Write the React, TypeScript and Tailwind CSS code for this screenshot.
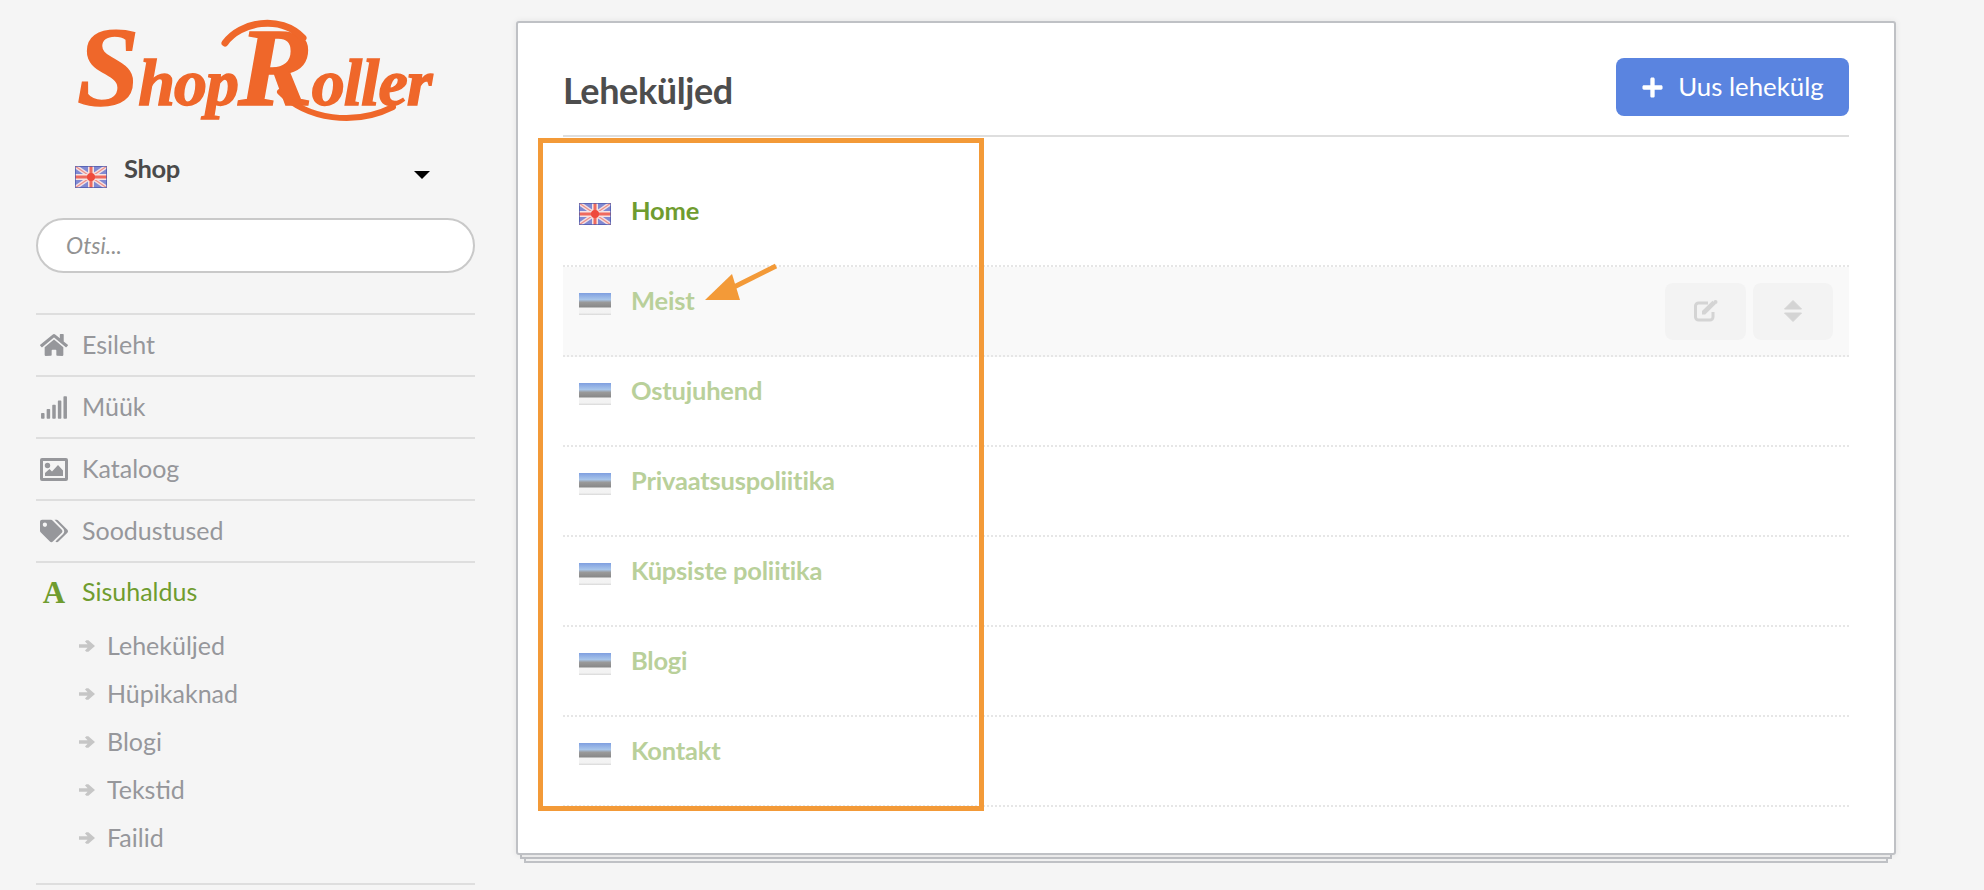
import { FaHome, FaPlus, FaSignal, FaTags } from "react-icons/fa";

const sans = "font-['Lato','Noto_Sans',sans-serif]";

function ImageIcon() {
  return (
    <svg width="28" height="23" viewBox="0 0 28 23" fill="currentColor">
      <path d="M2 0H26A2 2 0 0 1 28 2V21A2 2 0 0 1 26 23H2A2 2 0 0 1 0 21V2A2 2 0 0 1 2 0ZM3 3V20H25V3Z" fillRule="evenodd" />
      <circle cx="7.5" cy="7.5" r="2.7" />
      <path d="M5 18V15L9.5 11L12 13.5L18 7L23 12.5V18Z" />
    </svg>
  );
}

function SubArrow() {
  return (
    <svg width="16" height="12" viewBox="0 0 16 12" fill="#c6c6c6" className="shrink-0">
      <path d="M0 4.2H8.6L6 1.4L7.4 0.2H9.4L16 6L9.4 11.8H7.4L6 10.6L8.6 7.8H0Z" />
    </svg>
  );
}

function EditIcon() {
  return (
    <svg width="24" height="22" viewBox="0 0 24 22" fill="none">
      <path d="M19 12V17A3 3 0 0 1 16 20H4.5A3 3 0 0 1 1.5 17V6A3 3 0 0 1 4.5 3H14" stroke="#d4d4d4" strokeWidth="3" />
      <path d="M8 11L18.5 0.8L21.8 4L11.2 14.5H8Z" fill="#d4d4d4" />
      <circle cx="21.5" cy="2" r="2" fill="#d4d4d4" />
    </svg>
  );
}

function SortIcon() {
  return (
    <svg width="18" height="22" viewBox="0 0 18 22" fill="#d4d4d4">
      <path d="M9 0.5L17.5 9H0.5Z" stroke="#d4d4d4" strokeLinejoin="round" />
      <path d="M9 21.5L17.5 13H0.5Z" stroke="#d4d4d4" strokeLinejoin="round" />
    </svg>
  );
}

const navItems = [
  { label: "Esileht", icon: <FaHome className="h-[26px] w-[28px]" /> },
  { label: "Müük", icon: <FaSignal className="h-[23px] w-[28px]" /> },
  { label: "Kataloog", icon: <ImageIcon /> },
  { label: "Soodustused", icon: <FaTags className="h-[26px] w-[28px]" /> },
];

const subItems = ["Leheküljed", "Hüpikaknad", "Blogi", "Tekstid", "Failid"];

const pages = ["Home", "Meist", "Ostujuhend", "Privaatsuspoliitika", "Küpsiste poliitika", "Blogi", "Kontakt"];

function UkFlag() {
  return (
    <svg width="32" height="22" viewBox="0 0 32 22" className="block shrink-0">
      <rect width="32" height="22" fill="#8089d2" />
      <path d="M0 0L32 22M32 0L0 22" stroke="#f2dfe2" strokeWidth="4" />
      <path d="M0 0L32 22M32 0L0 22" stroke="#ef8f88" strokeWidth="1.2" />
      <path d="M16 0V22M0 11H32" stroke="#f4e3e3" strokeWidth="6" />
      <path d="M16 0V22M0 11H32" stroke="#ef6a5e" strokeWidth="3" />
      <circle cx="16" cy="11" r="4" fill="#ee4a3c" />
      <rect x="0.5" y="0.5" width="31" height="21" fill="none" stroke="#4a55a8" strokeOpacity="0.7" />
    </svg>
  );
}

function EeFlag({ id }: { id: string }) {
  return (
    <svg width="32" height="22" viewBox="0 0 32 22" className="block shrink-0">
      <defs>
        <linearGradient id={id} x1="0" y1="0" x2="0" y2="1">
          <stop offset="0" stopColor="#7f9fe0" />
          <stop offset="0.3" stopColor="#a9c6ea" />
          <stop offset="0.42" stopColor="#9a9a9a" />
          <stop offset="0.62" stopColor="#8a8a8a" />
          <stop offset="0.7" stopColor="#f4f4f4" />
          <stop offset="0.9" stopColor="#f2f2f2" />
          <stop offset="1" stopColor="#d8d8d8" />
        </linearGradient>
      </defs>
      <rect width="32" height="22" fill={`url(#${id})`} />
    </svg>
  );
}

// no script font on the box, so the wordmark is serif italic text plus the R's swashes
function Logo() {
  return (
    <svg width="362" height="124" viewBox="0 -20 362 124" className="ml-[39px] block">
      <text
        x="2"
        y="85"
        fontFamily="'Liberation Serif', serif"
        fontStyle="italic"
        fontWeight="700"
        fontSize="66"
        letterSpacing="-1"
        fill="#ef672a"
        stroke="#ef672a"
        strokeWidth="1.5"
      >
        <tspan fontSize="112">S</tspan>hop<tspan fontSize="112">R</tspan>oller
      </text>
      <path d="M150 23C165 2 205 -6 228 18" fill="none" stroke="#ef672a" strokeWidth="7" strokeLinecap="round" />
      <path d="M205 72C232 100 280 106 318 87" fill="none" stroke="#ef672a" strokeWidth="6" strokeLinecap="round" />
    </svg>
  );
}

function Sidebar() {
  return (
    <aside className="ml-9 w-[439px] shrink-0">
      <Logo />
      <div className="mt-[38px] flex h-[26px] items-center pl-[39px] pr-[45px]">
        <span className="mt-[4px]">
          <UkFlag />
        </span>
        <span className="ml-[17px] -mt-[12px] text-[25.5px] leading-none font-bold tracking-[-0.4px] text-[#4a4a4a]">Shop</span>
        <span className="ml-auto h-0 w-0 border-x-[8px] border-t-[8px] border-x-transparent border-t-black" />
      </div>
      <div className="mt-[30px] flex h-[55px] items-center rounded-full border-2 border-[#c9c9c9] bg-white pl-[28px]">
        <span className="text-[23px] italic text-[#929292]">Otsi...</span>
      </div>
      <nav className="mt-[40px] border-t-2 border-[#dedede]">
        {navItems.map((item) => (
          <div key={item.label} className="flex h-[62px] items-center gap-[14px] border-b-2 border-[#dedede] pl-1 text-[#96979b]">
            {item.icon}
            <span className="-mt-[2px] text-[25px] leading-none">{item.label}</span>
          </div>
        ))}
        <div className="flex h-[59px] items-center gap-[14px] pl-1 text-[#6f9c2f]">
          <span className="w-[28px] text-center font-['Liberation_Serif',serif] text-[31px] leading-none font-bold">A</span>
          <span className="-mt-[2px] text-[25px] leading-none">Sisuhaldus</span>
        </div>
        <ul className="pb-[21px]">
          {subItems.map((s) => (
            <li key={s} className="flex h-[48px] items-center gap-[12px] pl-[43px] text-[#96979b]">
              <SubArrow />
              <span className="-mt-[2px] text-[25px] leading-none">{s}</span>
            </li>
          ))}
        </ul>
        <div className="border-t-2 border-[#dedede]" />
      </nav>
    </aside>
  );
}

function PageRow({ name, index }: { name: string; index: number }) {
  const first = index === 0;
  const hovered = index === 1;
  return (
    <div
      className={`flex items-center border-b-2 border-dotted border-[#e6e6e6] px-4 ${first ? "h-[130px] pt-[20px]" : "h-[90px]"} ${hovered ? "bg-[#f9f9f9]" : ""}`}
    >
      <div className={`flex items-center ${first ? "" : "pb-[20px]"}`}>
        <span className="mt-[6px]">{first ? <UkFlag /> : <EeFlag id={`ee-${index}`} />}</span>
        <span className={`ml-[20px] text-[25.5px] leading-none font-bold tracking-[-0.2px] ${first ? "text-[#6f9c2f]" : "text-[#b9d09a]"}`}>{name}</span>
      </div>
      {hovered && (
        <div className="ml-auto flex gap-[7px]">
          <div className="flex h-[57px] w-[81px] items-center justify-center rounded-lg bg-[#f3f3f3]">
            <EditIcon />
          </div>
          <div className="flex h-[57px] w-[80px] items-center justify-center rounded-lg bg-[#f3f3f3]">
            <SortIcon />
          </div>
        </div>
      )}
    </div>
  );
}

function Main() {
  return (
    <main className="relative ml-[41px] mt-[21px] h-[842px] w-[1380px] shrink-0">
      <div className="absolute bottom-0 left-2 right-2 top-2 border-2 border-[#bfc1c5] bg-[#f1f1f1]" />
      <div className="absolute bottom-1 left-1 right-1 top-1 border-2 border-[#bfc1c5] bg-[#f1f1f1]" />
      <div className="relative h-[834px] rounded-[3px] border-2 border-[#bfc1c5] bg-white px-[45px] shadow-[0_0_6px_rgba(0,0,0,0.08)]">
        <header className="flex h-[114px] items-end justify-between border-b-2 border-[#dedede] pb-[19px]">
          <h1 className="mb-[8px] text-[36px] leading-none font-bold tracking-[-0.4px] text-[#4d4d4d]">Leheküljed</h1>
          <button className="flex h-[58px] w-[233px] items-center justify-center gap-[14px] rounded-lg bg-[#5a84e0] text-[25.8px] text-white">
            <FaPlus className="h-[23px] w-[23px]" />
            <span className="leading-none">Uus lehekülg</span>
          </button>
        </header>
        {pages.map((p, i) => (
          <PageRow key={p} name={p} index={i} />
        ))}
        <div className="absolute left-[20px] top-[115px] h-[673px] w-[446px] border-[5px] border-[#f39a38]" />
        <svg className="absolute left-[185px] top-[240px]" width="80" height="44" viewBox="0 0 80 44">
          <path d="M73 3L25 27" stroke="#f39a38" strokeWidth="5" />
          <path d="M2 37L29 11L37 37Z" fill="#f39a38" />
        </svg>
      </div>
    </main>
  );
}

export default function App() {
  return (
    <div className={`flex h-[890px] w-[1984px] overflow-hidden bg-[#f5f5f5] ${sans}`}>
      <Sidebar />
      <Main />
    </div>
  );
}
